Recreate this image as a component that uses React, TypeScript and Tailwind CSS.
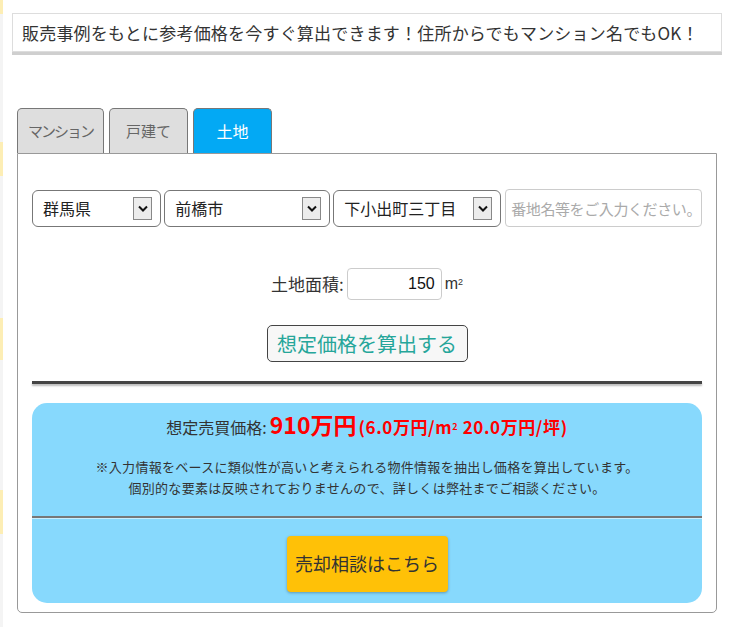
import React from 'react'

const jp = '[font-family:"Noto_Sans_CJK_JP","Noto_Sans",sans-serif]'

function Chevron() {
  return (
    <span className="flex h-[23px] w-[19px] items-center justify-center border border-[#888] bg-[#ececec]">
      <svg width="10" height="7" viewBox="0 0 10 7">
        <path d="M1 1.5 L5 5.5 L9 1.5" fill="none" stroke="#111" strokeWidth="2" />
      </svg>
    </span>
  )
}

function FakeSelect({ value, width }: { value: string; width: string }) {
  return (
    <div
      className={`flex h-[37px] ${width} items-center justify-between rounded-[6px] border border-[#777] bg-white pl-[10px] pr-[8px]`}
    >
      <span className="text-[16px] leading-none text-[#222]">{value}</span>
      <Chevron />
    </div>
  )
}

export default function App() {
  return (
    <div className={`relative flex h-[627px] w-[732px] overflow-hidden bg-white ${jp}`}>
      {/* left edge strip */}
      <div className="flex w-[3px] flex-col">
        <div className="h-[14px] bg-[#fdeeb5]" />
        <div className="h-[128px] bg-[#f4f4f4]" />
        <div className="h-[34px] bg-[#fdeeb5]" />
        <div className="h-[142px] bg-[#f4f4f4]" />
        <div className="h-[42px] bg-[#fdeeb5]" />
        <div className="h-[130px] bg-[#f4f4f4]" />
        <div className="h-[44px] bg-[#fdeeb5]" />
        <div className="flex-1 bg-[#f4f4f4]" />
      </div>

      <div className="flex flex-col pl-[9px]">
        {/* header */}
        <div className="mt-[13px] flex h-[39px] w-[710px] items-center border border-[#ddd] pl-[9px] shadow-[0_3px_0_#cfcfcf]">
          <span className="whitespace-nowrap text-[17px] leading-none tracking-[0.2px] text-[#333]">
            販売事例をもとに参考価格を今すぐ算出できます！住所からでもマンション名でもOK！
          </span>
        </div>

        {/* tabs */}
        <div className="ml-[5px] mt-[56px] flex gap-[5px]">
          <div className="flex h-[45px] w-[87px] items-center justify-center rounded-t-[5px] border border-b-0 border-[#777] bg-[#dedede] text-[15px] tracking-[-2px] text-[#666]">
            マンション
          </div>
          <div className="flex h-[45px] w-[79px] items-center justify-center rounded-t-[5px] border border-b-0 border-[#777] bg-[#dedede] text-[15px] text-[#666]">
            戸建て
          </div>
          <div className="flex h-[45px] w-[79px] items-center justify-center rounded-t-[5px] border border-b-0 border-[#777] bg-[#03a9f4] text-[16px] text-white">
            土地
          </div>
        </div>

        {/* panel */}
        <div className="ml-[5px] flex h-[460px] w-[700px] flex-col rounded-b-[5px] border border-[#999] px-[14px] pt-[35px]">
          <div className="flex items-center">
            <FakeSelect value="群馬県" width="w-[130px]" />
            <div className="w-[3px]" />
            <FakeSelect value="前橋市" width="w-[167px]" />
            <div className="w-[3px]" />
            <FakeSelect value="下小出町三丁目" width="w-[169px]" />
            <div className="w-[4px]" />
            <div className="flex h-[38px] w-[197px] items-center rounded-[4px] border border-[#ccc] pl-[5px]">
              <span className="whitespace-nowrap text-[15px] leading-none tracking-[-0.4px] text-[#aaa]">
                番地名等をご入力ください。
              </span>
            </div>
          </div>

          <div className="mt-[41px] flex items-center justify-center">
            <span className="text-[17px] text-[#333]">土地面積:</span>
            <div className="ml-[3px] flex h-[32px] w-[95px] items-center justify-end rounded-[4px] border border-[#ccc] pr-[6px]">
              <span className="font-['Liberation_Sans',sans-serif] text-[16px] text-[#111]">150</span>
            </div>
            <span className="ml-[3px] font-['Liberation_Sans',sans-serif] text-[16px] text-[#333]">
              m<sup className="text-[9px]">2</sup>
            </span>
          </div>

          <div className="mt-[25px] flex justify-center">
            <div className="flex h-[37px] w-[201px] items-center justify-center rounded-[5px] border border-[#444] bg-[#f7f7f7] text-[20px] text-[#26a69a]">
              想定価格を算出する
            </div>
          </div>

          <div className="mt-[19px] h-[3px] bg-[#444] shadow-[0_2px_2px_#bbb]" />

          {/* result */}
          <div className="mt-[19px] flex h-[200px] flex-col rounded-[15px] bg-[#87d9fd] pt-[4px]">
            <div className="flex items-baseline justify-center text-[#333]">
              <span className="text-[16px]">想定売買価格:</span>
              <span className="ml-[3px] text-[23px] font-bold text-[#f00]">910万円</span>
              <span className="ml-[2px] text-[17px] font-bold tracking-[0.6px] text-[#f00]">
                (6.0万円/m<sup className="text-[9px]">2</sup> 20.0万円/坪)
              </span>
            </div>
            <div className="mt-[14px] flex flex-col items-center text-[13px] leading-[21px] tracking-[0.3px] text-[#333]">
              <span>※入力情報をベースに類似性が高いと考えられる物件情報を抽出し価格を算出しています。</span>
              <span>個別的な要素は反映されておりませんので、詳しくは弊社までご相談ください。</span>
            </div>
            <div className="mt-[18px] h-[2px] bg-[#777] shadow-[0_1px_0_#c8eefe]" />
            <div className="mt-[18px] flex justify-center">
              <div className="flex h-[56px] w-[161px] items-center justify-center rounded-[4px] bg-[#ffc107] text-[18px] text-[#333] shadow-[0_1px_3px_rgba(0,0,0,0.3)]">
                売却相談はこちら
              </div>
            </div>
          </div>
        </div>
      </div>
    </div>
  )
}
